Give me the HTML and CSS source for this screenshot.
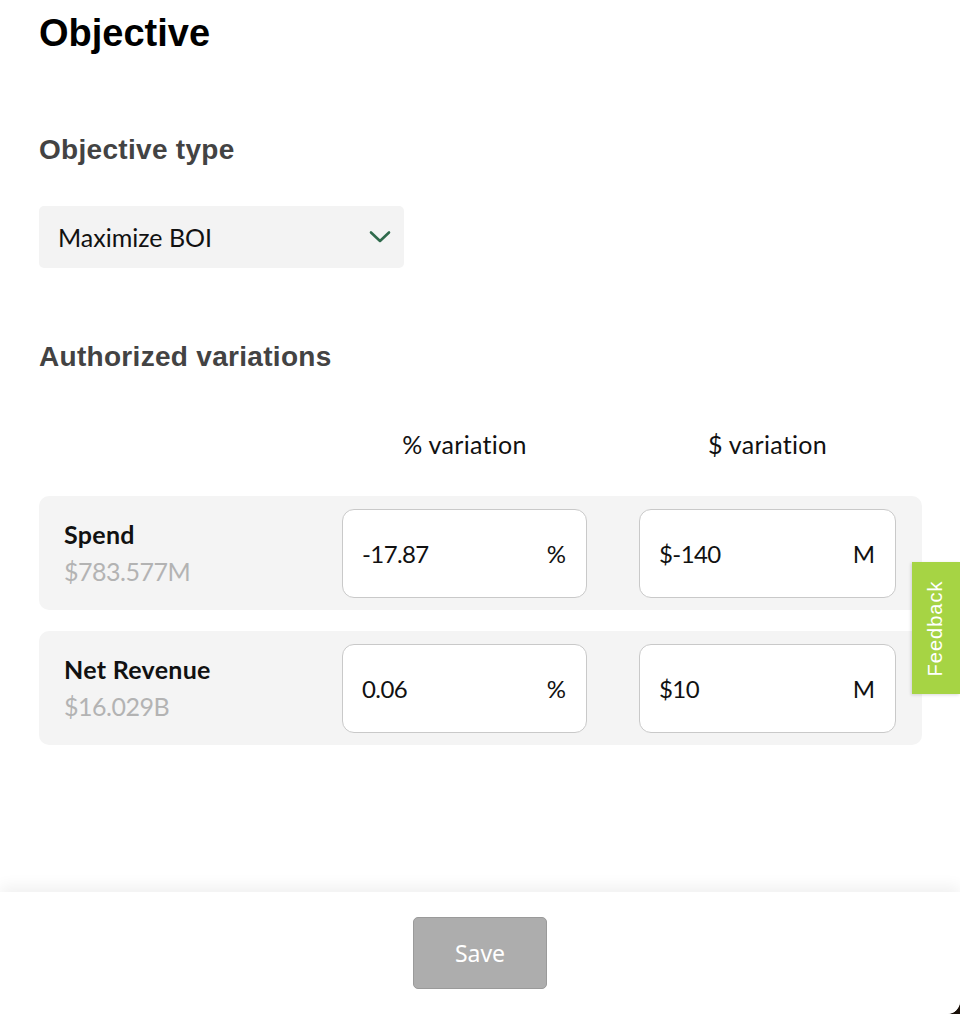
FILE: index.html
```html
<!DOCTYPE html>
<html>
<head>
<meta charset="utf-8">
<link rel="stylesheet" href="styles.css">
</head>
<body>
<div class="panel">
  <main class="content">
    <h1 class="title">Objective</h1>
    <h2 class="section-title type-title">Objective type</h2>
    <div class="select">
      <span class="select-value">Maximize BOI</span>
      <svg class="chevron" width="22" height="14" viewBox="0 0 22 14"><path d="M2 2.5 L11 11 L20 2.5" fill="none" stroke="#2f6a4c" stroke-width="2.6" stroke-linecap="round" stroke-linejoin="round"/></svg>
    </div>
    <h2 class="section-title var-title">Authorized variations</h2>
    <div class="table">
      <div class="thead">
        <div></div>
        <div class="th">% variation</div>
        <div class="th">$ variation</div>
      </div>
      <div class="row">
        <div class="label">
          <div class="name">Spend</div>
          <div class="amount">$783.577M</div>
        </div>
        <div class="input"><span class="num">-17.87</span><span class="unit">%</span></div>
        <div class="input"><span class="num">$-140</span><span class="unit">M</span></div>
      </div>
      <div class="row">
        <div class="label">
          <div class="name">Net Revenue</div>
          <div class="amount">$16.029B</div>
        </div>
        <div class="input"><span class="num">0.06</span><span class="unit">%</span></div>
        <div class="input"><span class="num">$10</span><span class="unit">M</span></div>
      </div>
    </div>
  </main>
  <footer class="footer">
    <button class="save">Save</button>
  </footer>
  <div class="feedback"><span>Feedback</span></div>
</div>
</body>
</html>
```
FILE: styles.css
```css
html, body {
  margin: 0;
  padding: 0;
  height: 100%;
}
body {
  background: #1a1009;
  font-family: "Lato", "Open Sans", sans-serif;
  color: #111;
}
.panel {
  position: relative;
  height: 1014px;
  background: #fff;
  border-bottom-right-radius: 13px;
  overflow: hidden;
  display: flex;
  flex-direction: column;
}
.content {
  flex: 1;
  padding: 0 39px;
}
.title {
  margin: 0;
  padding-top: 11px;
  font-family: "Liberation Sans", Arial, sans-serif;
  font-weight: 700;
  font-size: 38px;
  line-height: 44px;
  color: #000;
}
.section-title {
  margin: 0;
  font-family: "Liberation Sans", Arial, sans-serif;
  font-weight: 700;
  font-size: 28px;
  letter-spacing: 0.3px;
  line-height: 32px;
  color: #434343;
}
.type-title {
  margin-top: 79px;
}
.select {
  margin-top: 40px;
  width: 365px;
  height: 62px;
  box-sizing: border-box;
  background: #f3f3f3;
  border-radius: 5px;
  display: flex;
  align-items: center;
  justify-content: space-between;
  padding: 0 13px 0 19px;
}
.select-value {
  font-size: 25px;
  color: #111;
}
.var-title {
  margin-top: 73px;
}
.table {
  margin-top: 51px;
  width: 883px;
}
.thead {
  display: grid;
  grid-template-columns: 303px 245px 52px 257px;
  height: 40px;
  align-items: center;
}
.thead .th {
  font-size: 25px;
  letter-spacing: 0.3px;
  text-align: center;
  color: #111;
}
.thead .th:last-child {
  grid-column: 4;
}
.row {
  margin-top: 32px;
  height: 114px;
  box-sizing: border-box;
  background: #f4f4f4;
  border-radius: 10px;
  display: grid;
  grid-template-columns: 303px 245px 52px 257px;
  align-items: center;
}
.row + .row {
  margin-top: 21px;
}
.row .input:last-child {
  grid-column: 4;
}
.label {
  padding-left: 25px;
}
.name {
  font-weight: 700;
  font-size: 25px;
  letter-spacing: 0.3px;
  line-height: 36px;
  color: #111;
}
.amount {
  font-size: 25px;
  letter-spacing: -0.5px;
  line-height: 38px;
  color: #b3b3b3;
}
.input {
  height: 89px;
  box-sizing: border-box;
  background: #fff;
  border: 1px solid #c9c9c9;
  border-radius: 12px;
  display: flex;
  align-items: center;
  justify-content: space-between;
  padding: 0 20px 0 19px;
  font-size: 24px;
  color: #111;
}
.input .num {
  letter-spacing: -0.6px;
}
.footer {
  height: 122px;
  flex: none;
  background: #fff;
  box-shadow: 0 -6px 14px rgba(0, 0, 0, 0.06);
  display: flex;
  justify-content: center;
  padding-top: 25px;
  box-sizing: border-box;
}
.save {
  width: 134px;
  height: 72px;
  background: #adadad;
  border: 1px solid #9a9a9a;
  border-radius: 5px;
  color: #fff;
  font-family: "Noto Sans", "Open Sans", sans-serif;
  font-size: 23px;
}
.feedback {
  position: absolute;
  right: 0;
  top: 562px;
  width: 48px;
  height: 132px;
  background: #a6d444;
  box-shadow: -1px 1px 3px rgba(0,0,0,0.15);
  display: flex;
  align-items: center;
  justify-content: center;
}
.feedback span {
  transform: rotate(-90deg);
  white-space: nowrap;
  color: #fff;
  font-family: "Liberation Sans", Arial, sans-serif;
  font-size: 20px;
  letter-spacing: 1px;
}
```
